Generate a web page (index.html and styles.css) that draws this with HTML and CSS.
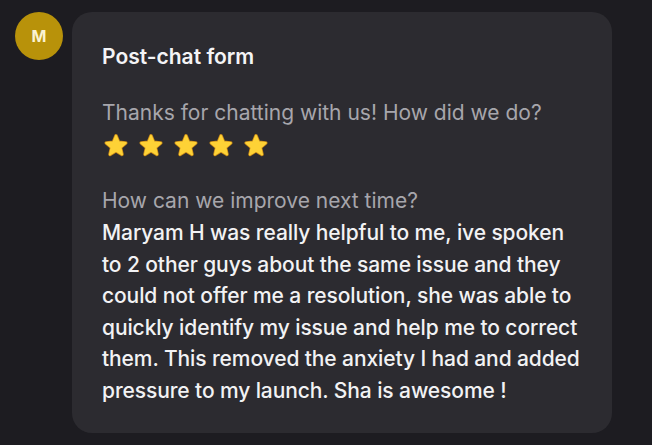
FILE: index.html
```html
<!DOCTYPE html>
<html>
<head>
<meta charset="utf-8">
<link rel="stylesheet" href="styles.css">
</head>
<body>
<div class="row">
  <div class="avatar">M</div>
  <div class="card">
    <h2 class="title">Post-chat form</h2>
    <p class="q">Thanks for chatting with us! How did we do?</p>
    <div class="stars">
      <svg class="star" viewBox="0 0 24 24"><path class="edge" d="M12 3.5L14.53 9.52 21.030 10.06 16.09 14.33 17.58 20.69 12 17.3 6.42 20.69 7.91 14.33 2.97 10.06 9.47 9.52Z"/><path class="fill" d="M12 3.5L14.53 9.52 21.03 10.06 16.09 14.33 17.58 20.69 12 17.3 6.42 20.69 7.91 14.33 2.97 10.06 9.47 9.52Z"/></svg>
      <svg class="star" viewBox="0 0 24 24"><path class="edge" d="M12 3.5L14.53 9.52 21.03 10.06 16.09 14.33 17.58 20.69 12 17.3 6.42 20.69 7.91 14.33 2.97 10.06 9.47 9.52Z"/><path class="fill" d="M12 3.5L14.53 9.52 21.03 10.06 16.09 14.33 17.58 20.69 12 17.3 6.42 20.69 7.91 14.33 2.97 10.06 9.47 9.52Z"/></svg>
      <svg class="star" viewBox="0 0 24 24"><path class="edge" d="M12 3.5L14.53 9.52 21.03 10.06 16.09 14.33 17.58 20.69 12 17.3 6.42 20.69 7.91 14.33 2.97 10.06 9.47 9.52Z"/><path class="fill" d="M12 3.5L14.53 9.52 21.03 10.06 16.09 14.33 17.58 20.69 12 17.3 6.42 20.69 7.91 14.33 2.97 10.06 9.47 9.52Z"/></svg>
      <svg class="star" viewBox="0 0 24 24"><path class="edge" d="M12 3.5L14.53 9.52 21.03 10.06 16.09 14.33 17.58 20.69 12 17.3 6.42 20.69 7.91 14.33 2.97 10.06 9.47 9.52Z"/><path class="fill" d="M12 3.5L14.53 9.52 21.03 10.06 16.09 14.33 17.58 20.69 12 17.3 6.42 20.69 7.91 14.33 2.97 10.06 9.47 9.52Z"/></svg>
      <svg class="star" viewBox="0 0 24 24"><path class="edge" d="M12 3.5L14.53 9.52 21.03 10.06 16.09 14.33 17.58 20.69 12 17.3 6.42 20.69 7.91 14.33 2.97 10.06 9.47 9.52Z"/><path class="fill" d="M12 3.5L14.53 9.52 21.03 10.06 16.09 14.33 17.58 20.69 12 17.3 6.42 20.69 7.91 14.33 2.97 10.06 9.47 9.52Z"/></svg>
    </div>
    <p class="q q2">How can we improve next time?</p>
    <p class="answer">Maryam H was really helpful to me, ive spoken to 2 other guys about the same issue and they could not offer me a resolution, she was able to quickly identify my issue and help me to correct them. This removed the anxiety I had and added pressure to my launch. Sha is awesome !</p>
  </div>
</div>
</body>
</html>
```
FILE: styles.css
```css
html, body {
  margin: 0;
  padding: 0;
  background: #1d1c21;
  font-family: Inter, "Noto Sans", sans-serif;
}
.row {
  display: flex;
  align-items: flex-start;
  gap: 9px;
  padding: 12px 0 0 15px;
}
.avatar {
  width: 48px;
  height: 48px;
  border-radius: 50%;
  background: #b8920a;
  color: #fbf3d2;
  font-weight: 700;
  font-size: 16px;
  display: flex;
  align-items: center;
  justify-content: center;
  flex: none;
}
.card {
  width: 540px;
  height: 421px;
  box-sizing: border-box;
  background: #2c2b30;
  border-radius: 20px;
  padding: 32px 25px 27px 30px;
}
.title {
  margin: 0 0 29px;
  font-size: 21px;
  font-weight: 600;
  color: #f4f4f6;
  line-height: 26px;
}
.q {
  margin: 0;
  font-size: 21px;
  line-height: 28px;
  color: #a7a6ac;
}
.q2 { margin-top: 29px; }
.stars {
  display: flex;
  gap: 9px;
  margin-top: 5px;
  margin-left: 1px;
}
.star {
  width: 26px;
  height: 26px;
}
.star .edge {
  fill: #d99a1c;
  stroke: #c98a18;
  stroke-width: 3.2;
  stroke-linejoin: round;
}
.star .fill {
  fill: #fed236;
  stroke: #fed236;
  stroke-width: 1.8;
  stroke-linejoin: round;
}
.answer {
  margin: 2px 0 0;
  font-size: 21px;
  line-height: 31.6px;
  letter-spacing: -0.1px;
  color: #f2f2f4;
  font-weight: 500;
}
```
